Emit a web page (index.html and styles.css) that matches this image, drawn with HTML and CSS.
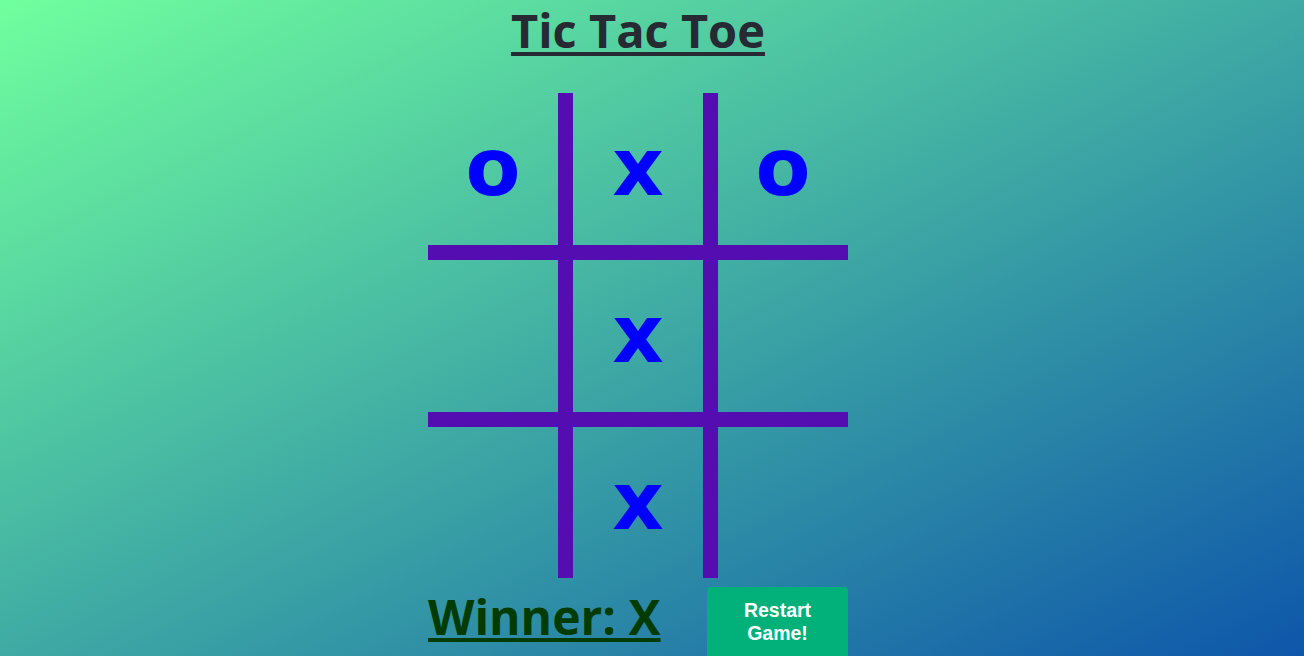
FILE: index.html
```html
<!DOCTYPE html>
<html lang="en">
<head>
	<meta charset="UTF-8">
	<meta name="viewport" content="width=device-width, initial-scale=1.0">
	<title>Tic Tac Toe</title>
	<link rel="stylesheet" href="styles.css">
</head>
<body>

<div id="game">
	<h1 class="title">Tic Tac Toe</h1>
	<div class="board">
		<div class="cell">o</div>
		<div class="cell col_mid">x</div>
		<div class="cell">o</div>
		<div class="cell row_mid"></div>
		<div class="cell col_mid row_mid">x</div>
		<div class="cell row_mid"></div>
		<div class="cell row_last"></div>
		<div class="cell col_mid row_last">x</div>
		<div class="cell row_last"></div>
	</div>
	<div class="status">
		<h2 class="winner">Winner: X</h2>
		<button class="restart">Restart Game!</button>
	</div>
</div>

</body>
</html>
```

FILE: styles.css
```css
html, body {
	margin: 0;
	padding: 0;
	width: 100vw;
	height: 100vh;
	overflow: hidden;
}

body {
	background: linear-gradient(to bottom right, #70ff9e, #0e56aa);
	display: flex;
	justify-content: center;
	padding-right: 28px;
	box-sizing: border-box;
}

#game {
	width: 420px;
	display: flex;
	flex-direction: column;
	align-items: center;
}

.title {
	margin: 0;
	font-family: "Open Sans", sans-serif;
	font-size: 47px;
	font-weight: 700;
	line-height: 60px;
	color: #262a33;
	text-decoration: underline;
	text-decoration-thickness: 4px;
	text-underline-offset: 4px;
}

.board {
	margin-top: 33px;
	display: grid;
	grid-template-columns: 130px 160px 130px;
	grid-template-rows: 167px 167px 151px;
}

.cell {
	border-bottom: 15px solid #540db0;
	display: flex;
	justify-content: center;
	align-items: center;
	font-family: "DejaVu Sans", sans-serif;
	font-weight: bold;
	font-size: 80px;
	color: #0000ff;
	line-height: 1;
	padding-bottom: 2px;
}

.col_mid {
	border-left: 15px solid #540db0;
	border-right: 15px solid #540db0;
}

.row_last {
	border-bottom: none;
}

.status {
	width: 100%;
	margin-top: 9px;
	display: flex;
	justify-content: space-between;
	align-items: flex-start;
}

.winner {
	margin: 0;
	font-family: "Open Sans", sans-serif;
	font-size: 48px;
	font-weight: 700;
	line-height: 60px;
	color: #033c03;
	text-decoration: underline;
	text-decoration-thickness: 4px;
	text-underline-offset: 3px;
}

.restart {
	width: 141px;
	height: 80px;
	background-color: #02b07a;
	color: white;
	border: none;
	border-radius: 4px;
	font-family: "Liberation Sans", Arial, sans-serif;
	font-size: 19.5px;
	font-weight: bold;
	line-height: 23px;
	padding: 12px 25px 22px;
}
```
